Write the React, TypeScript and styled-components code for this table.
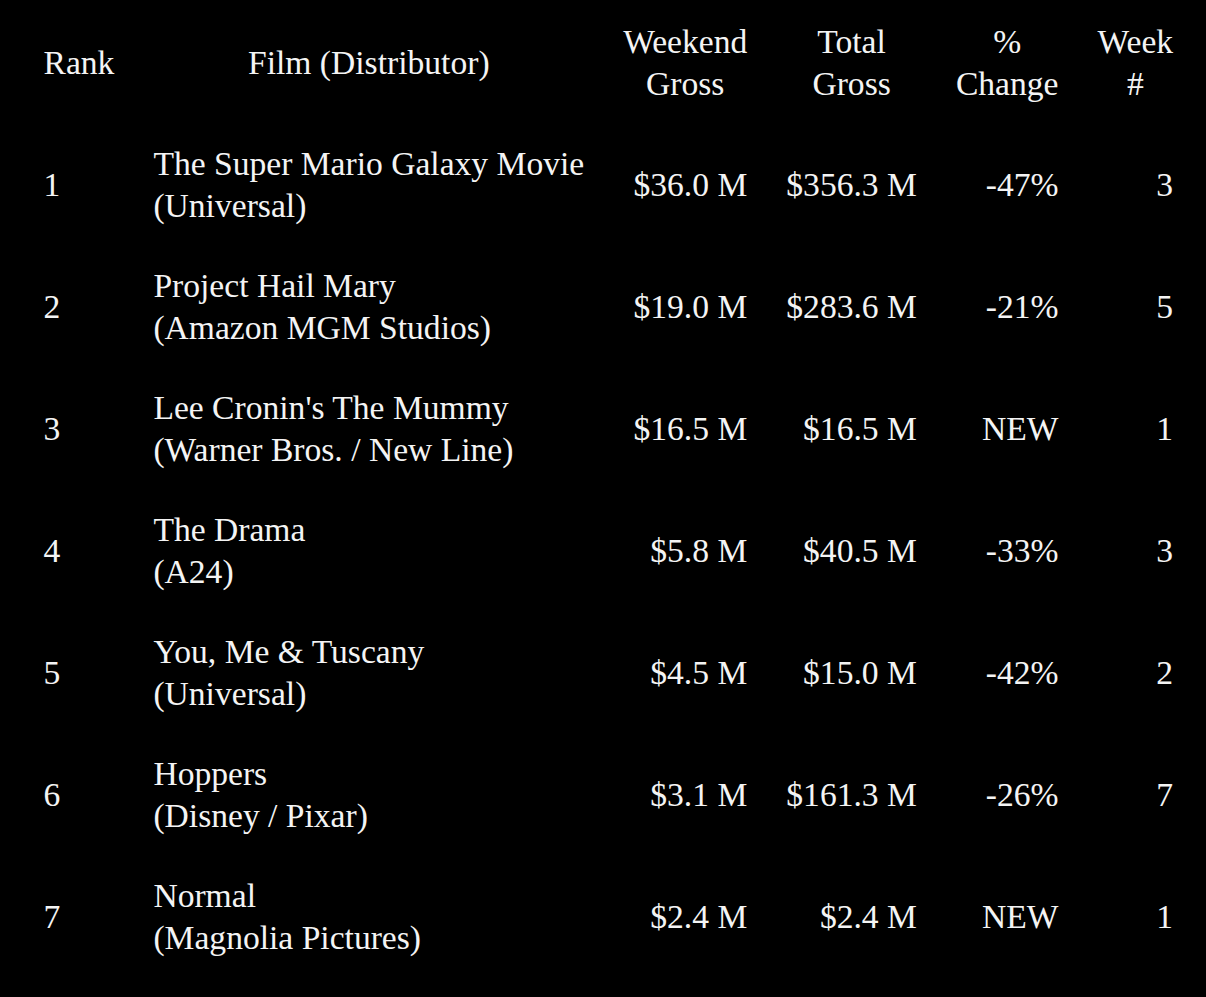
import React from "react";
import styled, { createGlobalStyle } from "styled-components";

const GlobalStyle = createGlobalStyle`
  html, body {
    margin: 0;
    padding: 0;
    background: #000;
  }
  body {
    font-family: "Liberation Serif", "Times New Roman", serif;
    color: #f4f4f4;
  }
`;

type Film = {
  rank: number;
  title: string;
  distributor: string;
  weekend: string;
  total: string;
  change: string;
  week: number;
};

const films: Film[] = [
  { rank: 1, title: "The Super Mario Galaxy Movie", distributor: "Universal", weekend: "$36.0 M", total: "$356.3 M", change: "-47%", week: 3 },
  { rank: 2, title: "Project Hail Mary", distributor: "Amazon MGM Studios", weekend: "$19.0 M", total: "$283.6 M", change: "-21%", week: 5 },
  { rank: 3, title: "Lee Cronin's The Mummy", distributor: "Warner Bros. / New Line", weekend: "$16.5 M", total: "$16.5 M", change: "NEW", week: 1 },
  { rank: 4, title: "The Drama", distributor: "A24", weekend: "$5.8 M", total: "$40.5 M", change: "-33%", week: 3 },
  { rank: 5, title: "You, Me & Tuscany", distributor: "Universal", weekend: "$4.5 M", total: "$15.0 M", change: "-42%", week: 2 },
  { rank: 6, title: "Hoppers", distributor: "Disney / Pixar", weekend: "$3.1 M", total: "$161.3 M", change: "-26%", week: 7 },
  { rank: 7, title: "Normal", distributor: "Magnolia Pictures", weekend: "$2.4 M", total: "$2.4 M", change: "NEW", week: 1 },
];

const App = () => {
  return (
    <Page>
      <GlobalStyle />
      <BoxTable>
        <thead>
          <tr>
            <HeadCell $align="left">Rank</HeadCell>
            <HeadCell>Film (Distributor)</HeadCell>
            <HeadCell>Weekend<br />Gross</HeadCell>
            <HeadCell>Total<br />Gross</HeadCell>
            <HeadCell>%<br />Change</HeadCell>
            <HeadCell>Week<br />#</HeadCell>
          </tr>
        </thead>
        <tbody>
          {films.map((film) => (
            <tr key={film.rank}>
              <Cell $align="left">{film.rank}</Cell>
              <Cell $align="left">
                {film.title}
                <br />({film.distributor})
              </Cell>
              <Cell>{film.weekend}</Cell>
              <Cell>{film.total}</Cell>
              <Cell>{film.change}</Cell>
              <Cell>{film.week}</Cell>
            </tr>
          ))}
        </tbody>
      </BoxTable>
    </Page>
  );
};

export default App;

const Page = styled.div`
  width: 1206px;
  height: 997px;
  background: #000;
  padding: 2px 0 0 24px;
  box-sizing: border-box;
  overflow: hidden;
`;

const BoxTable = styled.table`
  border-collapse: collapse;
  font-size: 33.6px;
  line-height: 42px;
  color: #f4f4f4;
`;

const HeadCell = styled.th<{ $align?: "left" | "center" }>`
  font-weight: normal;
  text-align: ${(p) => p.$align || "center"};
  vertical-align: middle;
  padding: 19px 19.5px;
  white-space: nowrap;
`;

const Cell = styled.td<{ $align?: "left" | "right" }>`
  text-align: ${(p) => p.$align || "right"};
  vertical-align: middle;
  padding: 19px 19.5px;
  white-space: nowrap;
`;
